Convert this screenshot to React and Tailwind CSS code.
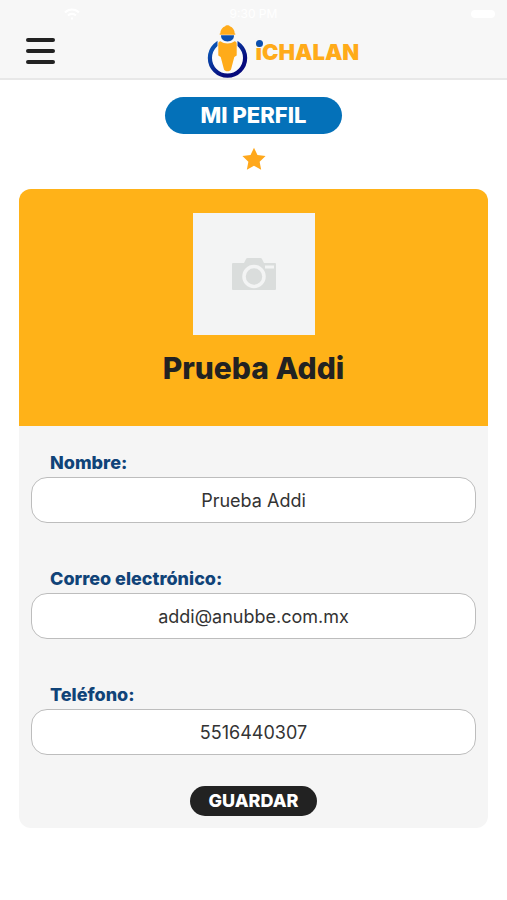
import React from "react";

function Logo() {
  return (
    <a href="#inicio" aria-label="iChalan" className="flex items-center gap-2">
      <svg width="41" height="54" viewBox="0 -1 41 54" aria-hidden="true">
        <defs>
          <linearGradient id="ring" x1="0" y1="0" x2="0.8" y2="1">
            <stop offset="0.2" stopColor="#0a4fb0" />
            <stop offset="0.8" stopColor="#060a7c" />
          </linearGradient>
        </defs>
        <circle cx="20.500" cy="33" r="17.600" fill="#fbfbfb" stroke="url(#ring)" strokeWidth="4.200" />
        <path d="M10.500 10h20v18h-20z" fill="#f7f7f7" />
        <path d="M14 10.300h13c0 4-2.600 6.200-6.500 6.200S14 14.300 14 10.300z" fill="#0a4fb0" />
        <path d="M13.300 8.500c0-3.600 2-6.200 4.900-7.200.5-1.300 4.100-1.300 4.600 0 2.900 1 4.900 3.600 4.900 7.200h.6v1.300H12.700V8.500z" fill="#ffab1a" />
        <path d="M13.500 16.300c4.200 2.900 9.800 2.900 14 0 1.300.2 2.200 1 2.200 2.500v11.700l-2.400 1.500-3.300 12.500c-.9 2.400-6.100 2.400-7 0L13.700 32l-2.400-1.500V18.800c0-1.500.9-2.300 2.200-2.500z" fill="#ffab1a" />
      </svg>
      <span className="relative pt-0.5 font-['Inter',sans-serif] text-[22px] leading-6 font-black text-[#ffab1a]">
        iCHALAN
        <span className="absolute top-0.5 left-0 size-[7px] rounded-full bg-[#0a4fb0]" />
      </span>
    </a>
  );
}

function StatusBar() {
  return (
    <div className="grid h-6 grid-cols-3 items-center px-3 pt-1 text-[12px] leading-5 text-white">
      <span className="flex items-center gap-2">
        <span className="w-11" />
        <svg width="16" height="12" viewBox="0 0 16 12" fill="none" stroke="currentColor" strokeWidth="2" aria-hidden="true">
          <path d="M1 4.500c4-4 10-4 14 0M4 7.500c2.300-2.200 5.700-2.200 8 0M7 10.500h2" />
        </svg>
      </span>
      <span className="text-center">9:30 PM</span>
      <span className="flex justify-end">
        <span className="h-2 w-6 rounded-sm bg-white" />
      </span>
    </div>
  );
}

function Field({ id, label, type, value }) {
  return (
    <div className="flex flex-col">
      <label htmlFor={id} className="pl-[19px] text-[18px] leading-7 font-extrabold text-[#104378]">
        {label}
      </label>
      <input
        id={id}
        type={type}
        defaultValue={value}
        className="h-[46px] w-full rounded-2xl border border-[#bdbdbd] bg-white px-4 text-center text-[18px] text-[#333333] outline-none"
      />
    </div>
  );
}

export default function App() {
  return (
    <div className="min-h-screen bg-white font-['Inter',sans-serif]">
      <header className="border-b-2 border-[#e8e8e8] bg-[#f7f7f7]">
        <StatusBar />
        <div className="grid h-[54px] grid-cols-[11fr_auto_9fr] items-center pl-[26px]">
          <button type="button" aria-label="Abrir menú" className="flex w-[29px] flex-col gap-[7px]">
            <span className="h-1 rounded-full bg-[#222222]" />
            <span className="h-1 rounded-full bg-[#222222]" />
            <span className="h-1 rounded-full bg-[#222222]" />
          </button>
          <Logo />
        </div>
      </header>

      <main className="flex flex-col px-[19px] pt-[17px] pb-[72px]">
        <h1 className="self-center rounded-full bg-[#0471b9] px-9 text-[22px] leading-[37px] font-extrabold text-white">
          MI PERFIL
        </h1>
        <svg className="mt-3 mb-[17px] self-center" width="26" height="26" viewBox="0 0 24 24" fill="#ffa81c" role="img" aria-label="Calificación">
          <path d="M12 1.500l3.200 6.900 7.500.9-5.500 5.200 1.400 7.500-6.600-3.700L5.400 22l1.400-7.500L1.300 9.300l7.500-.9z" />
        </svg>

        <section className="overflow-hidden rounded-xl bg-[#f5f5f5]">
          <div className="flex h-[237px] flex-col items-center bg-[#ffb218] pt-6">
            <div className="flex size-[122px] items-center justify-center bg-[#f3f4f4]">
              <svg width="46" height="34" viewBox="0 0 46 34" role="img" aria-label="Foto de perfil">
                <path d="M2 6h11l2-4q.5-1 1.500-1h13q1 0 1.500 1l2 4h11q1 0 1 1v25q0 1-1 1H2q-1 0-1-1V7q0-1 1-1z" fill="#dadddc" />
                <circle cx="23" cy="19.500" r="10" fill="none" stroke="#f3f4f4" strokeWidth="3.500" />
                <path d="M34 8.500h9v3h-9z" fill="#f3f4f4" />
              </svg>
            </div>
            <h2 className="mt-[13px] text-[30px] leading-10 font-extrabold text-[#222222]">Prueba Addi</h2>
          </div>
          <form className="flex flex-col px-3 pt-[23px] pb-3" onSubmit={(e) => e.preventDefault()}>
            <div className="flex flex-col gap-[42px]">
              <Field id="nombre" label="Nombre:" type="text" value="Prueba Addi" />
              <Field id="correo" label="Correo electrónico:" type="email" value="addi@anubbe.com.mx" />
              <Field id="telefono" label="Teléfono:" type="tel" value="5516440307" />
            </div>
            <button type="submit" className="mt-[31px] self-center rounded-full bg-[#222222] px-[18px] text-[18px] leading-[30px] font-extrabold text-white">
              GUARDAR
            </button>
          </form>
        </section>
      </main>
    </div>
  );
}
